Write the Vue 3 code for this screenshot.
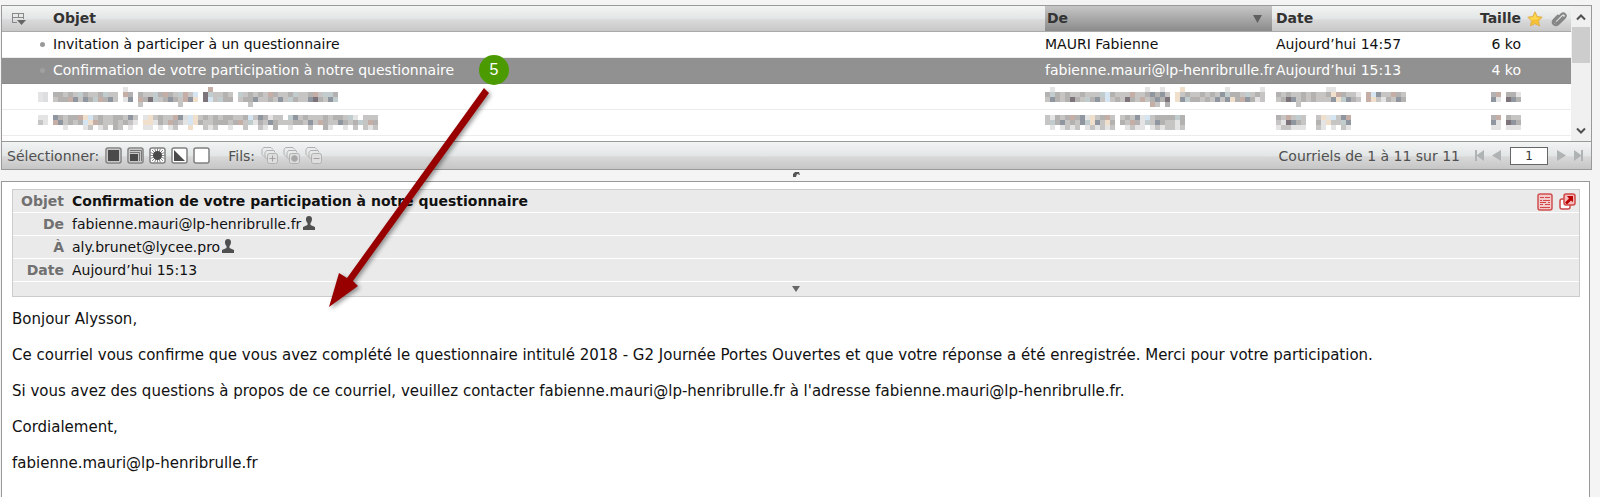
<script setup>
import { ref } from "vue";

const page = ref(1);

// Messages of the current folder. Hidden values are stored as rows of
// mosaic cells, one letter per cell (see the tones map below)
const messages = [
	{
		id: 1,
		subject: "Invitation à participer à un questionnaire",
		from: "MAURI Fabienne",
		date: "Aujourd’hui 14:57",
		size: "6 ko",
	},
	{
		id: 2,
		subject: "Confirmation de votre participation à notre questionnaire",
		from: "fabienne.mauri@lp-henribrulle.fr",
		date: "Aujourd’hui 15:13",
		size: "4 ko",
		selected: true,
	},
	{
		id: 3,
		hidden: true,
		bullet: ["..", "ma", "ma", ".."],
		subject: [
			"..............m................f.........................",
			"ccbcbgcbbcgbb.fc.cbbgcfcbgfbi.egbbcb.gbcbcbfcbbcgbbcfbggc",
			"bccfdbdcgfcdb.md.fcegbcdcbfdh.eibgcc.bccdbbcbdbgcbbdecbdg",
			".................b.......b.............b.................",
		],
		from: [
			".m..................m..m...h........m......m",
			"cgcbcbbcbbbgicbbbfbbcdcdb.hbcbbcbcbdgccbgbcb",
			"bdcbcecbgcdbibcbecbfbcdce.hdgccbcbdbdhcfdcmb",
			".....................fb.c...................",
		],
		date: [
			"..........mm.............",
			"cbcbbcbcbbchfcbbm.fidbbfcb",
			"bcedbcbcbbbdhgdcb.fhbmcbdc",
			"....b.....................",
		],
		size: ["......", "cf.ccm", "dm.edc", "......"],
	},
	{
		id: 4,
		hidden: true,
		bullet: ["mm", "bm", ".."],
		subject: [
			"dcbccfhibcbbccbdb.mhbcbbfdaihbcbcbccbbcibdcmbb.gdbcbbbcbccbgm.bbb",
			"fdbcbcihfcbbcbcbm.hhmcbfcbmihcbbcccbcfbgmcbdcbbbccbdbfcbbdcbcgbfc",
			"..m...mb.mb.cb.m..mm.m.mb..h..bmb..m..b..bm.c..m...b..cm..m.b.bmb",
		],
		from: [
			"bmcbcfcdmhbcfb.bcbdmibccccgc",
			"bgcdbcbdghdbhc.cbfcmgbdcbbmc",
			".m.mbmb.mbmbmb..mbmm.mbmbbmb",
		],
		date: ["cbfbgb..bhmibdf", "bmedcb..cmhbbgd", "mbbmmm..bm.m.bm"],
		size: ["cf.cbb", "dm.edc", "mm.mmm"],
	},
];

const tones = {
	a: "#dcdedf",
	b: "#c6c5c4",
	c: "#b3b2b1",
	d: "#8f969f",
	e: "#7d747b",
	f: "#c5aea6",
	g: "#c1cccf",
	h: "#f0dfcb",
	i: "#d5e6f2",
	m: "#e4e4e4",
};

const cell = 5;

function cells(rows) {
	return rows.flatMap((row, y) =>
		[...row]
			.map((tone, x) => ({ key: `${x}-${y}`, x: x * cell, y: y * cell, fill: tones[tone] }))
			.filter((c) => c.fill)
	);
}

const columns = ["subject", "from", "date", "size"];

const selectors = ["all", "page", "unread", "invert", "none"];
const threads = ["expand", "unread", "collapse"];

const selectorNames = {
	all: "Tous",
	page: "Page actuelle",
	unread: "Non lus",
	invert: "Inverser",
	none: "Aucun",
};

const threadNames = {
	expand: "Développer tout",
	unread: "Développer les non lus",
	collapse: "Réduire tout",
};

const body = [
	"Bonjour Alysson,",
	"Ce courriel vous confirme que vous avez complété le questionnaire intitulé 2018 - G2 Journée Portes Ouvertes et que votre réponse a été enregistrée. Merci pour votre participation.",
	"Si vous avez des questions à propos de ce courriel, veuillez contacter fabienne.mauri@lp-henribrulle.fr à l'adresse fabienne.mauri@lp-henribrulle.fr.",
	"Cordialement,",
	"fabienne.mauri@lp-henribrulle.fr",
];
</script>

<template>
	<main class="mail">
		<section class="list">
			<div class="list__view">
				<table class="messages">
					<thead>
						<tr>
							<th class="messages__options">
								<button type="button" class="icon-button" aria-label="Options de la liste">
									<svg width="16" height="14" viewBox="0 0 16 14">
										<path d="M1 1.500h12M1.500 1v10M1 10.500h5M1 5.500h11M7.500 1v5M12.500 1v6" fill="none" stroke="#888" />
										<path d="M6 8h9l-4.500 5z" fill="#666" />
									</svg>
								</button>
							</th>
							<th class="messages__subject">Objet</th>
							<th class="messages__from">
								<span class="sorted">
									De
									<svg width="9" height="8" viewBox="0 0 9 8"><path d="M0 0h9L4.500 8z" fill="#606060" /></svg>
								</span>
							</th>
							<th class="messages__date">Date</th>
							<th class="messages__size">Taille</th>
							<th class="messages__flag">
								<svg width="16" height="16" viewBox="0 0 16 16">
									<path d="M8 .8l2.200 4.700 5 .7-3.600 3.600.9 5.200L8 12.600 3.500 15l.9-5.200L.8 6.200l5-.7z" fill="#f6c035" stroke="#e0b050" stroke-linejoin="round" />
									<path d="M8 2.500l1.500 3.800 3.500.6-4 1.600-5 .5-1.500-2.200 3.800-.5z" fill="#fbd850" />
								</svg>
							</th>
							<th class="messages__flag">
								<svg width="16" height="16" viewBox="0 0 16 16">
									<path d="M12.500 5.500l-6 6c-1.600 1.600-3.800-.6-2.200-2.200l6-6c2.700-2.500 6 .9 3.600 3.400l-6.400 6.300c-3.500 3.300-7.800-1-4.500-4.500l4.500-4.500" fill="none" stroke="#858585" stroke-width="2" />
								</svg>
							</th>
						</tr>
					</thead>
					<tbody>
						<tr v-for="message in messages" :key="message.id" :class="{ selected: message.selected }">
							<td class="messages__bullet">
								<svg v-if="message.hidden" width="10" :height="message.bullet.length * cell" aria-hidden="true">
									<rect v-for="c in cells(message.bullet)" :key="c.key" :x="c.x" :y="c.y" width="5" height="5" :fill="c.fill" />
								</svg>
								<i v-else class="bullet"></i>
							</td>
							<td v-for="column in columns" :key="column" :class="`messages__${column}`">
								<svg
									v-if="message.hidden"
									class="mosaic"
									:width="message[column][1].length * cell"
									:height="message[column].length * cell"
									aria-hidden="true"
								>
									<rect v-for="c in cells(message[column])" :key="c.key" :x="c.x" :y="c.y" width="5" height="5" :fill="c.fill" />
								</svg>
								<template v-else>{{ message[column] }}</template>
							</td>
							<td></td>
							<td></td>
						</tr>
					</tbody>
				</table>
				<div class="scrollbar" aria-hidden="true">
					<svg width="10" height="7" viewBox="0 0 10 7"><path d="M1 5.500l4-4 4 4" /></svg>
					<div class="scrollbar__track"><div class="scrollbar__thumb"></div></div>
					<svg width="10" height="7" viewBox="0 0 10 7"><path d="M1 1.500l4 4 4-4" /></svg>
				</div>
			</div>

			<footer class="toolbar">
				<span>Sélectionner:</span>
				<div class="toolbar__group">
					<button v-for="name in selectors" :key="name" type="button" class="icon-button" :aria-label="selectorNames[name]">
						<svg width="17" height="17" viewBox="0 0 17 17">
							<rect x="1" y="1" width="15" height="15" rx="2" fill="#fff" stroke="#808080" stroke-width="1.500" />
							<rect v-if="name === 'all' || name === 'page'" x="2" y="2" width="13" height="13" fill="#c9c9c9" />
							<rect v-if="name === 'all'" x="3" y="3" width="11" height="11" fill="#4a4a4a" />
							<g v-else-if="name === 'page'">
								<path d="M3 3.500h11.500V14M3 5.500h9.500V14" fill="none" stroke="#777" />
								<rect x="3" y="7" width="8" height="7" fill="#4a4a4a" />
							</g>
							<g v-else-if="name === 'unread'">
								<path d="M8.500 1v15M1 8.500h15M3 3l11 11M14 3L3 14M5.500 1.500l6 14M11.500 1.500l-6 14M1.500 5.500l14 6M15.500 5.500l-14 6" stroke="#888" />
								<circle cx="8.500" cy="8.500" r="4.500" fill="#4a4a4a" />
							</g>
							<path v-else-if="name === 'invert'" d="M3 3v11h11z" fill="#4a4a4a" />
						</svg>
					</button>
				</div>
				<span class="toolbar__threads">Fils:</span>
				<div class="toolbar__group">
					<button v-for="name in threads" :key="name" type="button" class="icon-button" :aria-label="threadNames[name]" disabled>
						<svg width="17" height="17" viewBox="0 0 17 17" fill="none" stroke="#b0b0b0">
							<path d="M3 9.500L1 7.500v-5l1.500-2h7.500l2 2M6 12.500l-2-2v-5l1.500-2h7.500l1 2" />
							<rect x="6.500" y="6.500" width="10" height="10" rx="2" fill="#dedede" />
							<path v-if="name === 'expand'" d="M8.500 11.500h6M11.500 8.500v6" stroke="#a0a0a0" />
							<path v-else-if="name === 'collapse'" d="M8.500 11.500h6" stroke="#a0a0a0" />
							<circle v-else cx="11.500" cy="11.500" r="3" fill="#a6a6a6" />
						</svg>
					</button>
				</div>
				<div class="pager">
					<span class="pager__count">Courriels de 1 à 11 sur 11</span>
					<button type="button" class="icon-button" aria-label="Première page" disabled>
						<svg width="11" height="11" viewBox="0 0 11 11"><path d="M1 0h2v5l7-5v11L3 6v5H1z" fill="#b0b3b3" /></svg>
					</button>
					<button type="button" class="icon-button" aria-label="Page précédente" disabled>
						<svg width="11" height="11" viewBox="0 0 11 11"><path d="M10 0v11L1 5.500z" fill="#b0b3b3" /></svg>
					</button>
					<input v-model="page" class="pager__input" type="text" aria-label="Page" />
					<button type="button" class="icon-button" aria-label="Page suivante" disabled>
						<svg width="11" height="11" viewBox="0 0 11 11"><path d="M1 0v11l9-5.500z" fill="#b0b3b3" /></svg>
					</button>
					<button type="button" class="icon-button" aria-label="Dernière page" disabled>
						<svg width="11" height="11" viewBox="0 0 11 11"><path d="M10 0H8v5L1 0v11l7-5v5h2z" fill="#b0b3b3" /></svg>
					</button>
				</div>
			</footer>
		</section>

		<div class="splitter">
			<svg width="7" height="5" viewBox="0 0 7 5"><path d="M0 5V2l2-2h4l1 3-3-1-1 3z" fill="#555" /></svg>
		</div>

		<article class="preview">
			<header class="headers">
				<dl class="headers__rows">
					<div class="headers__row">
						<dt>Objet</dt>
						<dd class="headers__subject">Confirmation de votre participation à notre questionnaire</dd>
					</div>
					<div class="headers__row">
						<dt>De</dt>
						<dd>
							fabienne.mauri@lp-henribrulle.fr
							<svg class="contact" width="12" height="14" viewBox="0 0 12 14">
								<path d="M6 0c4 0 3.500 5 1.500 7v2L12 11v3H0v-3l4.500-2V7C2.500 5 2 0 6 0z" fill="#505050" />
							</svg>
						</dd>
					</div>
					<div class="headers__row">
						<dt>À</dt>
						<dd>
							aly.brunet@lycee.pro
							<svg class="contact" width="12" height="14" viewBox="0 0 12 14">
								<path d="M6 0c4 0 3.500 5 1.500 7v2L12 11v3H0v-3l4.500-2V7C2.500 5 2 0 6 0z" fill="#505050" />
							</svg>
						</dd>
					</div>
					<div class="headers__row">
						<dt>Date</dt>
						<dd>Aujourd’hui 15:13</dd>
					</div>
				</dl>
				<button type="button" class="headers__more" aria-label="Afficher plus d'en-têtes">
					<svg width="8" height="6" viewBox="0 0 8 6"><path d="M0 0h8L4 6z" fill="#666" /></svg>
				</button>
				<div class="headers__actions">
					<button type="button" class="icon-button" aria-label="Afficher en texte">
						<svg width="16" height="18" viewBox="0 0 16 18">
							<rect x="1" y="1" width="14" height="16" rx="2" fill="#f4c9c9" stroke="#d05050" stroke-width="1.500" />
							<path d="M3 4.500h4M8 4.500h5M3 7.500h2M6 7.500h7M3 9.500h6M11 9.500h2M3 11.500h3M8 11.500h5M3 14.500h10" stroke="#d04848" />
						</svg>
					</button>
					<button type="button" class="icon-button" aria-label="Ouvrir dans une nouvelle fenêtre">
						<svg width="17" height="18" viewBox="0 0 17 18">
							<rect x="1" y="6" width="10" height="10" rx="2" fill="#fff" stroke="#d04848" stroke-width="1.500" />
							<rect x="5" y="1" width="11" height="11" rx="2" fill="#f2baba" stroke="#d04848" stroke-width="1.500" />
							<path d="M8 3h6v6l-2-1.500-4 4-2-2 4-4z" fill="#bb0000" />
						</svg>
					</button>
				</div>
			</header>
			<div class="preview__body">
				<p v-for="line in body" :key="line">{{ line }}</p>
			</div>
		</article>

		<!-- Step marker lying over the mail client -->
		<div class="step">
			<span class="step__badge">5</span>
			<svg class="step__arrow" width="170" height="230" viewBox="0 0 170 230">
				<path d="M160 8l5 5L29 201l5 5L5 227l10-34 8 5z" fill="#980000" />
			</svg>
		</div>
	</main>
</template>

<style>
body {
	margin: 0;
	background: #f4f4f4;
}
</style>

<style scoped>
.mail {
	position: relative;
	display: flex;
	flex-direction: column;
	box-sizing: border-box;
	min-height: 100vh;
	padding: 5px 8px 0 1px;
	font-family: "DejaVu Sans", Verdana, sans-serif;
	font-size: 14px;
	color: #111;
}

svg {
	display: block;
}

.icon-button {
	display: block;
	padding: 0;
	border: 0;
	background: none;
}

/* Message list */
.list {
	border: 1px solid #999;
	background: #fff;
}

.list__view {
	display: flex;
	height: 135px;
	overflow: hidden;
}

.messages {
	flex: 1;
	align-self: flex-start;
	width: 100%;
	table-layout: fixed;
	border-collapse: separate;
	border-spacing: 0;
}

.messages th {
	height: 25px;
	padding: 0 2px;
	border-bottom: 1px solid #aaa;
	background: linear-gradient(#f3f4f4, #e3e6e6 50%, #dadada 55%, #c8c8c8);
	color: #333;
	font-weight: bold;
	line-height: 25px;
	text-align: left;
}

.messages td {
	height: 25px;
	padding: 0 2px;
	border-bottom: 1px solid #ececec;
	line-height: 25px;
	white-space: nowrap;
}

.messages .messages__options {
	width: 49px;
	padding-left: 9px;
	box-sizing: border-box;
}

.messages .messages__from {
	width: 227px;
	padding: 0;
}

.messages th.messages__from {
	background: linear-gradient(#c6c6c6, #8b8b8b);
}

.messages .messages__date {
	width: 173px;
	padding-left: 4px;
}

.messages .messages__size {
	width: 68px;
	text-align: right;
}

.messages .messages__flag {
	width: 20px;
	padding: 0 0 0 4px;
}

.messages .messages__bullet {
	padding-left: 36px;
}

.sorted {
	display: flex;
	align-items: center;
	justify-content: space-between;
	padding: 0 10px 0 2px;
}

.bullet {
	display: block;
	width: 5px;
	height: 5px;
	margin-left: 2px;
	border-radius: 50%;
	background: #999;
}

.messages__size .mosaic {
	margin-left: auto;
}

.selected td {
	border-bottom-color: #8a8a8a;
	background: #919191;
	color: #fff;
}

.selected .bullet {
	background: #a0a0a0;
}

/* Scroll bar */
.scrollbar {
	display: flex;
	flex-direction: column;
	align-items: center;
	width: 20px;
	padding: 8px 0 7px;
	box-sizing: border-box;
	background: #f0f0f0;
}

.scrollbar path {
	fill: none;
	stroke: #505050;
	stroke-width: 2;
}

.scrollbar__track {
	flex: 1;
	width: 18px;
	padding: 6px 0;
}

.scrollbar__thumb {
	height: 36px;
	background: #cdcdcd;
}

/* List footer */
.toolbar {
	display: flex;
	align-items: center;
	height: 27px;
	padding: 0 7px 0 5px;
	border-top: 1px solid #999;
	background: linear-gradient(#f2f4f4, #e3e6e6 50%, #d8d8d8 55%, #c6c6c6);
	color: #505050;
}

.toolbar__group {
	display: flex;
	gap: 5px;
	margin-left: 6px;
}

.toolbar__threads {
	margin-left: 18px;
}

.pager {
	display: flex;
	align-items: center;
	gap: 6px;
	margin-left: auto;
}

.pager__count {
	margin-right: 8px;
}

.pager__input {
	width: 38px;
	height: 18px;
	margin: 0 2px;
	padding: 0;
	box-sizing: border-box;
	border: 1px solid #666;
	background: #fff;
	color: #333;
	font: inherit;
	font-size: 12px;
	text-align: center;
}

.splitter {
	display: flex;
	justify-content: center;
	height: 9px;
	padding-top: 2px;
	box-sizing: border-box;
}

/* Message preview */
.preview {
	flex: 1;
	margin: 2px 2px 0 0;
	padding: 7px 9px 0 10px;
	border: 1px solid #999;
	border-bottom: 0;
	background: #fff;
}

.headers {
	position: relative;
	border: 1px solid #ccc;
	background: #eaeaea;
}

.headers__rows {
	margin: 0;
}

.headers__row {
	display: flex;
	height: 22px;
	border-bottom: 1px solid #fff;
	line-height: 22px;
}

.headers__row dt {
	width: 51px;
	margin-right: 8px;
	color: #707070;
	font-weight: bold;
	text-align: right;
}

.headers__row dd {
	display: flex;
	gap: 2px;
	margin: 0;
}

.headers__row .headers__subject {
	font-weight: bold;
}

.contact {
	margin-top: 3px;
}

.headers__more {
	display: flex;
	align-items: center;
	justify-content: center;
	width: 100%;
	height: 14px;
	padding: 0;
	border: 0;
	background: none;
}

.headers__actions {
	position: absolute;
	top: 3px;
	right: 3px;
	display: flex;
	gap: 6px;
}

.preview__body {
	padding-top: 13px;
	font-size: 15px;
}

.preview__body p {
	margin: 0 0 18px;
	line-height: 18px;
}

/* Step marker */
.step {
	position: absolute;
	top: 55px;
	left: 324px;
	pointer-events: none;
}

.step__badge {
	display: block;
	width: 30px;
	height: 30px;
	margin-left: 155px;
	border-radius: 50%;
	background: #4b9b00;
	color: #fff;
	font-family: "Liberation Sans", Arial, sans-serif;
	font-size: 16px;
	line-height: 30px;
	text-align: center;
}

.step__arrow {
	margin-top: -5px;
	filter: drop-shadow(2px 2px 2px rgba(0, 0, 0, 0.4));
}
</style>
